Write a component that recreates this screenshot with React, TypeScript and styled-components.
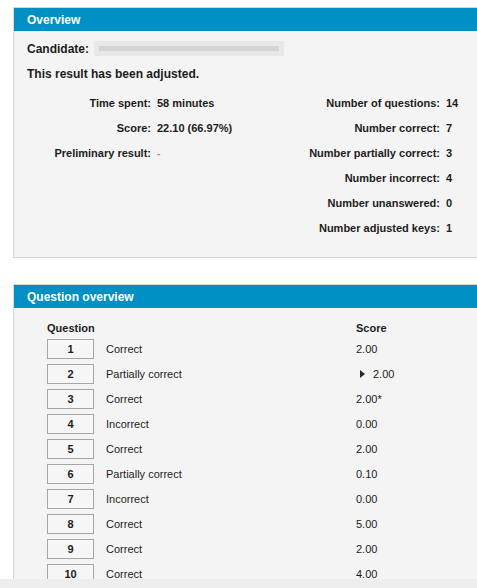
import React, { FC } from 'react';
import styled, { createGlobalStyle } from 'styled-components';

const GlobalStyle = createGlobalStyle`
   html, body {
      margin: 0;
      padding: 0;
      background: #ffffff;
      overflow: hidden;
   }
   body {
      font-family: "Liberation Sans", Arial, sans-serif;
      color: #1c1c1c;
   }
`;

interface Stat {
   label: string;
   value: string;
   accent?: boolean;
}

const leftStats: Stat[] = [
   { label: 'Time spent:', value: '58 minutes' },
   { label: 'Score:', value: '22.10 (66.97%)' },
   { label: 'Preliminary result:', value: '-', accent: true },
];

const rightStats: Stat[] = [
   { label: 'Number of questions:', value: '14' },
   { label: 'Number correct:', value: '7' },
   { label: 'Number partially correct:', value: '3' },
   { label: 'Number incorrect:', value: '4' },
   { label: 'Number unanswered:', value: '0' },
   { label: 'Number adjusted keys:', value: '1' },
];

interface Question {
   id: number;
   status: string;
   score: string;
   expandable?: boolean;
}

const questions: Question[] = [
   { id: 1, status: 'Correct', score: '2.00' },
   { id: 2, status: 'Partially correct', score: '2.00', expandable: true },
   { id: 3, status: 'Correct', score: '2.00*' },
   { id: 4, status: 'Incorrect', score: '0.00' },
   { id: 5, status: 'Correct', score: '2.00' },
   { id: 6, status: 'Partially correct', score: '0.10' },
   { id: 7, status: 'Incorrect', score: '0.00' },
   { id: 8, status: 'Correct', score: '5.00' },
   { id: 9, status: 'Correct', score: '2.00' },
   { id: 10, status: 'Correct', score: '4.00' },
];

const Caret: FC = () => (
   <CaretSvg viewBox="0 0 5 8" width="5" height="8">
      <polygon points="0,0 5,4 0,8" fill="#2b2b2b" />
   </CaretSvg>
);

const App: FC = (): JSX.Element => {
   const rows = rightStats.map((right, i) => ({ left: leftStats[i], right }));

   return (
      <>
         <GlobalStyle />
         <Viewport>
            <Page>
               <Panel>
                  <PanelHeader>Overview</PanelHeader>
                  <OverviewBody>
                     <CandidateRow>
                        <Strong>Candidate:</Strong>
                        <CandidateField>
                           <CandidateBar />
                        </CandidateField>
                     </CandidateRow>
                     <Notice>This result has been adjusted.</Notice>
                     <StatsGrid>
                        {rows.map(({ left, right }, i) => (
                           <React.Fragment key={i}>
                              <StatLabel>{left ? left.label : ''}</StatLabel>
                              <StatValue $accent={left?.accent}>{left ? left.value : ''}</StatValue>
                              <StatLabel>{right.label}</StatLabel>
                              <StatValue>{right.value}</StatValue>
                           </React.Fragment>
                        ))}
                     </StatsGrid>
                  </OverviewBody>
               </Panel>

               <Panel>
                  <PanelHeader>Question overview</PanelHeader>
                  <QuestionTable>
                     <HeadCell>Question</HeadCell>
                     <HeadCell />
                     <HeadCell>Score</HeadCell>
                     {questions.map(q => (
                        <React.Fragment key={q.id}>
                           <Cell>
                              <NumberBox>{q.id}</NumberBox>
                           </Cell>
                           <Cell>{q.status}</Cell>
                           <Cell>
                              {q.expandable ? (
                                 <Expand>
                                    <Caret />
                                    {q.score}
                                 </Expand>
                              ) : (
                                 q.score
                              )}
                           </Cell>
                        </React.Fragment>
                     ))}
                  </QuestionTable>
               </Panel>
            </Page>
         </Viewport>
         <BottomBar />
      </>
   );
};

export default App;

const Viewport = styled.div`
   height: 579px;
   overflow: hidden;
`;

const Page = styled.div`
   padding: 7px 0 0 13px;
   display: flex;
   flex-direction: column;
   gap: 26px;
`;

const Panel = styled.section`
   margin-right: -20px;
   background: #f4f4f4;
   border: 1px solid #d8d8d8;
`;

const PanelHeader = styled.h2`
   margin: 0;
   height: 23px;
   padding-left: 13px;
   display: flex;
   align-items: center;
   background: #0190c3;
   color: #ffffff;
   font-size: 12px;
   font-weight: bold;
`;

const OverviewBody = styled.div`
   padding: 10px 0 17px 13px;
`;

const Strong = styled.span`
   font-size: 12px;
   font-weight: bold;
`;

const CandidateRow = styled.div`
   display: flex;
   align-items: center;
   gap: 5px;
   height: 15px;
`;

const CandidateField = styled.div`
   width: 180px;
   height: 15px;
   padding: 0 5px;
   background: #e8e8e8;
   display: flex;
   align-items: center;
`;

const CandidateBar = styled.div`
   width: 100%;
   height: 5px;
   background: #d5d5d5;
`;

const Notice = styled.p`
   margin: 10px 0 0;
   line-height: 16px;
   font-size: 12px;
   font-weight: bold;
`;

const StatsGrid = styled.div`
   margin-top: 8px;
   display: grid;
   grid-template-columns: 130px 143px 146px auto;
   grid-auto-rows: 25px;
   font-size: 11px;
   font-weight: bold;
`;

const StatLabel = styled.div`
   text-align: right;
   padding-right: 6px;
   display: flex;
   align-items: center;
   justify-content: flex-end;
   white-space: nowrap;
`;

const StatValue = styled.div<{ $accent?: boolean }>`
   display: flex;
   align-items: center;
   white-space: nowrap;
   color: ${({ $accent }) => ($accent ? '#f07a26' : '#1c1c1c')};
`;

const QuestionTable = styled.div`
   padding: 12px 0 0 33px;
   display: grid;
   grid-template-columns: 59px 250px auto;
   grid-template-rows: 16px;
   grid-auto-rows: 25px;
   font-size: 11px;
`;

const HeadCell = styled.div`
   font-weight: bold;
   display: flex;
   align-items: center;
`;

const Cell = styled.div`
   display: flex;
   align-items: center;
   white-space: nowrap;
`;

const NumberBox = styled.div`
   box-sizing: border-box;
   width: 47px;
   height: 20px;
   border: 1px solid #a6a6a6;
   background: #f7f7f7;
   display: flex;
   align-items: center;
   justify-content: center;
   font-weight: bold;
`;

const Expand = styled.span`
   display: inline-flex;
   align-items: center;
   gap: 8px;
   padding-left: 4px;
`;

const CaretSvg = styled.svg`
   display: block;
`;

const BottomBar = styled.div`
   height: 9px;
   background: #eeeeee;
`;
